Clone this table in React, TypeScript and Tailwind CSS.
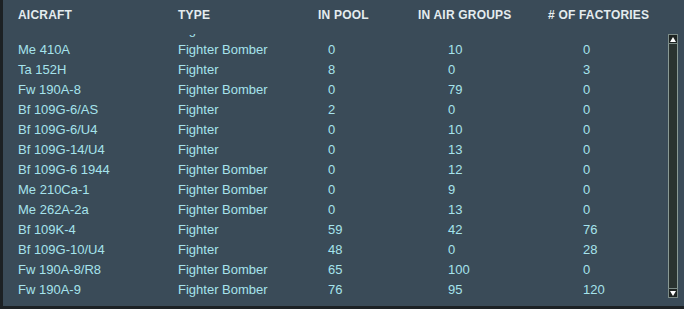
import React from "react";

const rows: [string, string, string, string, string][] = [
  ["Me 410A", "Fighter Bomber", "0", "10", "0"],
  ["Ta 152H", "Fighter", "8", "0", "3"],
  ["Fw 190A-8", "Fighter Bomber", "0", "79", "0"],
  ["Bf 109G-6/AS", "Fighter", "2", "0", "0"],
  ["Bf 109G-6/U4", "Fighter", "0", "10", "0"],
  ["Bf 109G-14/U4", "Fighter", "0", "13", "0"],
  ["Bf 109G-6 1944", "Fighter Bomber", "0", "12", "0"],
  ["Me 210Ca-1", "Fighter Bomber", "0", "9", "0"],
  ["Me 262A-2a", "Fighter Bomber", "0", "13", "0"],
  ["Bf 109K-4", "Fighter", "59", "42", "76"],
  ["Bf 109G-10/U4", "Fighter", "48", "0", "28"],
  ["Fw 190A-8/R8", "Fighter Bomber", "65", "100", "0"],
  ["Fw 190A-9", "Fighter Bomber", "76", "95", "120"],
];

export default function App() {
  return (
    <div
      className="w-[684px] h-[309px] flex flex-col bg-[#3a4b58] overflow-hidden"
      style={{ fontFamily: '"Liberation Sans", Arial, sans-serif' }}
    >
      <div className="flex flex-1 min-h-0">
        <div className="w-[3px] bg-[#1c2124]" />
        <div className="flex-1 flex flex-col min-w-0">
          <div className="h-[34px] pt-[8px] pl-[15px] grid grid-cols-[160px_140px_100px_130px_1fr] text-[12px] font-bold text-[#e4ecef] leading-[14px] tracking-[0.2px]">
            <div>AICRAFT</div>
            <div>TYPE</div>
            <div>IN POOL</div>
            <div>IN AIR GROUPS</div>
            <div># OF FACTORIES</div>
          </div>
          <div className="flex-1 flex min-h-0">
            <div className="flex-1 overflow-hidden">
              <div className="-mt-[14px] pl-[15px] text-[13px] text-[#a6e3ec] leading-[20px]">
                <div className="h-[20px] grid grid-cols-[160px_140px_100px_130px_1fr]">
                  <div />
                  <div>Fighter</div>
                </div>
                {rows.map((r, i) => (
                  <div
                    key={i}
                    className="h-[20px] grid grid-cols-[160px_140px_100px_130px_1fr]"
                  >
                    <div>{r[0]}</div>
                    <div>{r[1]}</div>
                    <div className="pl-[10px]">{r[2]}</div>
                    <div className="pl-[30px]">{r[3]}</div>
                    <div className="pl-[35px]">{r[4]}</div>
                  </div>
                ))}
              </div>
            </div>
            <div className="w-[10px] mr-[6px] mb-[8px] flex flex-col">
              <div className="h-[10px] bg-[#1e2422] border border-[#7d8c88] flex items-center justify-center">
                <svg width="6" height="5" viewBox="0 0 6 5">
                  <polygon points="3,0 6,5 0,5" fill="#ffffff" />
                </svg>
              </div>
              <div className="flex-1 bg-[#2a3330] border-x border-[#8a9a95]" />
              <div className="h-[10px] bg-[#1e2422] border border-[#7d8c88] flex items-center justify-center">
                <svg width="6" height="5" viewBox="0 0 6 5">
                  <polygon points="0,0 6,0 3,5" fill="#ffffff" />
                </svg>
              </div>
            </div>
          </div>
        </div>
      </div>
      <div className="h-[3px] bg-[#1c2124]" />
    </div>
  );
}
